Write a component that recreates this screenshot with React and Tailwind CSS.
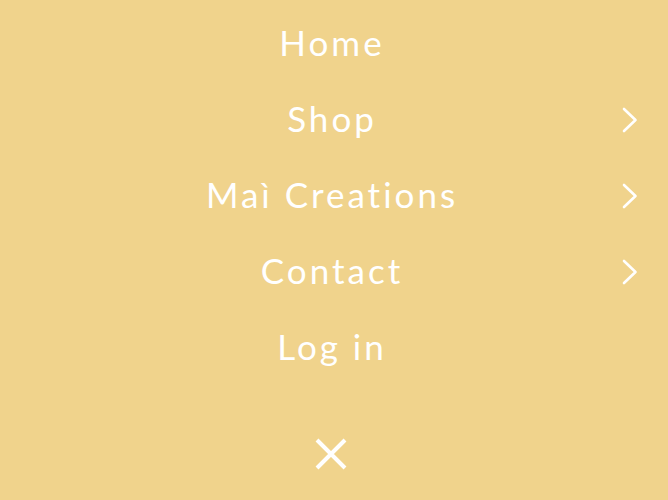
import React from 'react';

const items = [
    { label: 'Home', sub: false },
    { label: 'Shop', sub: true },
    { label: 'Maì Creations', sub: true },
    { label: 'Contact', sub: true },
    { label: 'Log in', sub: false },
];

const Chevron = () => (
    <svg width="16" height="26" viewBox="0 0 16 26" fill="none" stroke="white" strokeWidth="2.6" strokeLinecap="round" strokeLinejoin="round">
        <path d="M2 2l11.5 11L2 24" />
    </svg>
);

const App = () => {
    return (
        <div className="w-[668px] h-[500px] bg-[#f0d38c] text-white font-['Lato',sans-serif] flex flex-col">
            <nav className="pt-[4px]">
                {items.map((item) => (
                    <div key={item.label} className="grid grid-cols-[1fr_auto_1fr] items-center h-[76px] pl-[26px] pr-[30px]">
                        <span />
                        <a className="text-[35px] tracking-[3px] leading-none">{item.label}</a>
                        <span className="justify-self-end flex items-center mt-[4px]">{item.sub && <Chevron />}</span>
                    </div>
                ))}
            </nav>
            <div className="flex justify-center mt-[54px] pr-[6px]">
                <svg width="32" height="32" viewBox="0 0 32 32" stroke="white" strokeWidth="4">
                    <path d="M2 2l28 28M30 2L2 30" />
                </svg>
            </div>
        </div>
    );
};

export default App;
